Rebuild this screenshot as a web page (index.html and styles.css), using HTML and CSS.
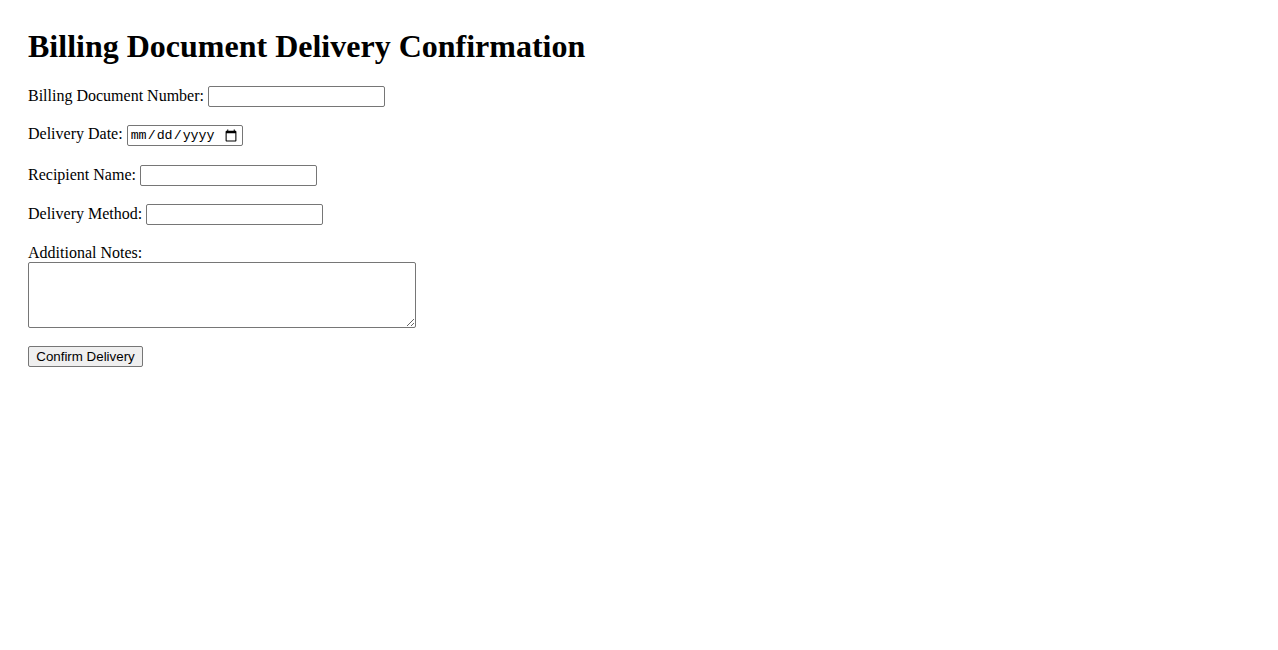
FILE: index.html
```html
<!DOCTYPE html>
<html>
<head>
<meta charset="utf-8">
<title>Billing Document Delivery Confirmation</title>
<link rel="stylesheet" href="styles.css">
</head>
<body>
<h1 class="title">Billing Document Delivery Confirmation</h1>
<form class="form">
  <div class="row"><label for="num">Billing Document Number:</label> <input class="text" id="num" type="text"></div>
  <div class="row"><label for="date">Delivery Date:</label> <input class="date" id="date" type="date"></div>
  <div class="row"><label for="name">Recipient Name:</label> <input class="text" id="name" type="text"></div>
  <div class="row"><label for="method">Delivery Method:</label> <input class="text" id="method" type="text"></div>
  <div class="row"><label for="notes">Additional Notes:</label><br><textarea class="notes" id="notes"></textarea></div>
  <button class="btn" type="submit">Confirm Delivery</button>
</form>
</body>
</html>
```
FILE: styles.css
```css
body {
  margin: 8px;
  padding: 20px;
  font-family: "Liberation Serif", "Times New Roman", serif;
  font-size: 16px;
  color: #000;
  background: #fff;
}
.title {
  font-size: 32px;
  font-weight: bold;
  margin: 0 0 21px 0;
  line-height: 37px;
}
.row {
  margin-bottom: 18.4px;
}
.text {
  box-sizing: border-box;
  width: 177px;
  height: 21px;
  border: 1px solid #767676;
  border-radius: 2px;
  padding: 1px 2px;
  font-size: 13.33px;
  vertical-align: baseline;
}
.date {
  box-sizing: border-box;
  width: 116px;
  height: 21px;
  border: 1px solid #767676;
  border-radius: 2px;
  padding: 1px 2px;
  font-family: "Liberation Mono", monospace;
  font-size: 13.33px;
}
.notes {
  box-sizing: border-box;
  width: 388px;
  height: 66px;
  border: 1px solid #767676;
  border-radius: 2px;
  margin: 0;
  display: inline-block;
  vertical-align: bottom;
}
.btn {
  box-sizing: border-box;
  height: 21px;
  width: 115px;
  margin: 0;
  padding: 1px 6px;
  font-family: "Liberation Sans", Arial, sans-serif;
  font-size: 13.33px;
  color: #000;
  background: #efefef;
  border: 1px solid #767676;
  border-radius: 2px;
}
```
